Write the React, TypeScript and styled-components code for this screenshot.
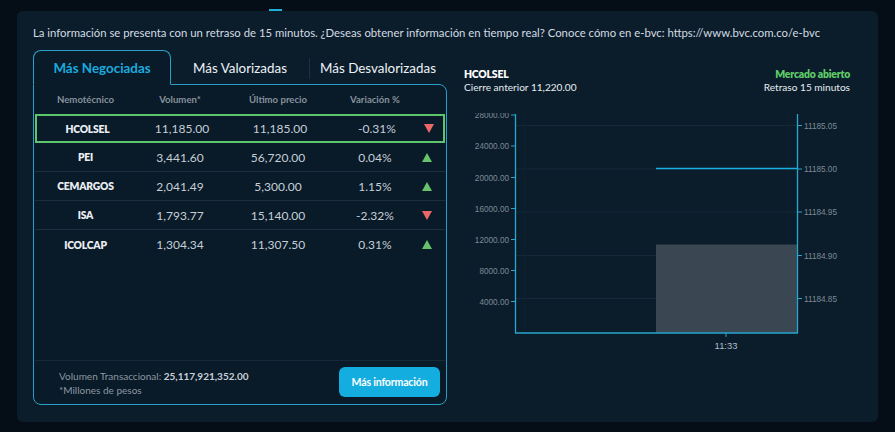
import React from 'react';
import styled, { createGlobalStyle } from 'styled-components';

const GlobalStyle = createGlobalStyle`
  html, body {
    margin: 0;
    padding: 0;
    background: #050e16;
  }
  body {
    font-family: Lato, "Open Sans", Arial, sans-serif;
  }
`;

// data
type Stock = {
  code: string;
  volume: string;
  price: string;
  change: string;
  up: boolean;
};

const STOCKS: Stock[] = [
  { code: 'HCOLSEL', volume: '11,185.00', price: '11,185.00', change: '-0.31%', up: false },
  { code: 'PEI', volume: '3,441.60', price: '56,720.00', change: '0.04%', up: true },
  { code: 'CEMARGOS', volume: '2,041.49', price: '5,300.00', change: '1.15%', up: true },
  { code: 'ISA', volume: '1,793.77', price: '15,140.00', change: '-2.32%', up: false },
  { code: 'ICOLCAP', volume: '1,304.34', price: '11,307.50', change: '0.31%', up: true },
];

const TABS = ['Más Negociadas', 'Más Valorizadas', 'Más Desvalorizadas'];

// layout
const Page = styled.div`
  width: 895px;
  height: 432px;
  padding: 0 17px;
  box-sizing: border-box;
  overflow: hidden;
`;

const TopStrip = styled.div`
  height: 11px;
  padding: 9px 0 0 252px;
  box-sizing: border-box;
`;

const Indicator = styled.div`
  width: 13px;
  height: 3px;
  background: #1fb0da;
`;

const Panel = styled.div`
  height: 411px;
  background: #0b1d2b;
  border-radius: 6px;
  padding: 14px 16px 0 16px;
  box-sizing: border-box;
`;

const Notice = styled.p`
  margin: 0 0 9px;
  font-size: 11.35px;
  line-height: 16px;
  color: #d3dbe2;
  white-space: nowrap;
`;

const Main = styled.div`
  display: flex;
  gap: 17px;
`;

// left card
const Card = styled.div`
  width: 414px;
  display: flex;
  flex-direction: column;
`;

const TabRow = styled.div`
  display: flex;
  height: 34px;
`;

const Tab = styled.div<{ $active?: boolean; $divider?: boolean }>`
  position: relative;
  z-index: ${(p) => (p.$active ? 1 : 0)};
  width: 138px;
  display: flex;
  align-items: center;
  justify-content: center;
  box-sizing: border-box;
  font-size: 13.4px;
  font-weight: ${(p) => (p.$active ? 700 : 400)};
  color: ${(p) => (p.$active ? '#1aaade' : '#eef3f7')};
  background: ${(p) => (p.$active ? '#091a28' : 'transparent')};
  border: ${(p) => (p.$active ? '1px solid #2a9fc8' : 'none')};
  border-bottom: ${(p) => (p.$active ? '1px solid #091a28' : 'none')};
  border-radius: 8px 8px 0 0;
  margin-bottom: ${(p) => (p.$active ? '-1px' : '0')};
  padding-top: 1px;

  &::before {
    content: '';
    display: ${(p) => (p.$divider ? 'block' : 'none')};
    position: absolute;
    left: 0;
    top: 8px;
    bottom: 5px;
    width: 1px;
    background: #1d3142;
  }
`;

const Body = styled.div`
  height: 321px;
  border: 1px solid #2a9fc8;
  border-radius: 0 8px 8px 8px;
  background: #091a28;
  box-sizing: border-box;
  display: flex;
  flex-direction: column;
  padding: 0 1px;
`;

const Grid = styled.div`
  display: grid;
  grid-template-columns: 101px 88px 108px 86px 1fr;
  align-items: center;
`;

const HeadRow = styled(Grid)`
  height: 29px;
  font-size: 9.6px;
  font-weight: 700;
  color: #86929c;
`;

const Row = styled(Grid)<{ $selected?: boolean }>`
  height: 29px;
  box-sizing: border-box;
  border: ${(p) => (p.$selected ? '2px solid #5cc46b' : 'none')};
  border-bottom: ${(p) => (p.$selected ? '2px solid #5cc46b' : '1px solid #1d2f3f')};
  &:last-of-type {
    border-bottom: none;
  }
`;

const Cell = styled.div<{ $code?: boolean }>`
  text-align: center;
  font-size: ${(p) => (p.$code ? '10.3px' : '12px')};
  font-weight: ${(p) => (p.$code ? 800 : 400)};
  color: ${(p) => (p.$code ? '#e9eef3' : '#c6cfd7')};
  letter-spacing: ${(p) => (p.$code ? '-0.2px' : '0')};
`;

const HeadCell = styled.div`
  text-align: center;
`;

const ArrowCell = styled.div`
  display: flex;
  padding-left: 4px;
`;

const Rows = styled.div`
  display: flex;
  flex-direction: column;
`;

const Spacer = styled.div`
  flex: 1;
`;

const Footer = styled.div`
  height: 42px;
  border-top: 1px solid #172a3a;
  display: flex;
  align-items: center;
  justify-content: space-between;
  padding: 0 5px 1px 24px;
`;

const FooterText = styled.div`
  font-size: 10px;
  line-height: 14px;
  color: #8c98a2;
  padding-top: 2px;
`;

const Strong = styled.span`
  font-weight: 700;
  color: #c9d1d8;
`;

const Button = styled.button`
  width: 101px;
  height: 30px;
  border: none;
  border-radius: 6px;
  background: #14ade0;
  color: #ffffff;
  font-family: inherit;
  font-size: 10.6px;
  font-weight: 700;
  letter-spacing: -0.2px;
  cursor: pointer;
`;

// right chart column
const ChartCol = styled.div`
  width: 386px;
  padding-top: 18px;
  box-sizing: border-box;
`;

const ChartHead = styled.div`
  display: flex;
  justify-content: space-between;
  font-size: 10.1px;
  line-height: 13px;
  color: #e7edf2;
  margin-bottom: 19px;
`;

const HeadBlock = styled.div<{ $right?: boolean }>`
  text-align: ${(p) => (p.$right ? 'right' : 'left')};
`;

const Title = styled.div<{ $green?: boolean }>`
  font-size: 10.4px;
  font-weight: 800;
  color: ${(p) => (p.$green ? '#5fcb68' : '#ffffff')};
  letter-spacing: -0.2px;
`;

const Arrow = ({ up }: { up: boolean }) => (
  <svg width="10" height="9" viewBox="0 0 10 9">
    {up ? (
      <polygon points="5,0 10,9 0,9" fill="#67c26d" />
    ) : (
      <polygon points="0,0 10,0 5,9" fill="#ec6768" />
    )}
  </svg>
);

const LEFT_TICKS = [
  { y: 2, label: '28000.00' },
  { y: 33, label: '24000.00' },
  { y: 64.5, label: '20000.00' },
  { y: 95.5, label: '16000.00' },
  { y: 126.5, label: '12000.00' },
  { y: 157.5, label: '8000.00' },
  { y: 188.5, label: '4000.00' },
];

const RIGHT_TICKS = [
  { y: 12.5, label: '11185.05' },
  { y: 56, label: '11185.00' },
  { y: 99, label: '11184.95' },
  { y: 142.5, label: '11184.90' },
  { y: 185.5, label: '11184.85' },
];

const Chart = () => (
  <svg width="386" height="241" viewBox="0 0 386 241" style={{ display: 'block' }}>
    {RIGHT_TICKS.map((t) => (
      <line key={t.label} x1="52" x2="332" y1={t.y} y2={t.y} stroke="#15293a" strokeWidth="1" />
    ))}
    <line x1="61" x2="61" y1="1" y2="220" stroke="#102333" strokeWidth="1" />
    <line x1="324" x2="324" y1="1" y2="220" stroke="#102333" strokeWidth="1" />

    <rect x="192" y="131.5" width="141" height="88.5" fill="#3a4752" />
    <line x1="192" x2="333" y1="55.5" y2="55.5" stroke="#1ab0e2" strokeWidth="1.6" />

    <line x1="51.5" x2="51.5" y1="1" y2="220" stroke="#27a6d0" strokeWidth="1.3" />
    <line x1="333.5" x2="333.5" y1="1" y2="220" stroke="#27a6d0" strokeWidth="1.3" />
    <line x1="51" x2="334" y1="220" y2="220" stroke="#27a6d0" strokeWidth="1.3" />

    {LEFT_TICKS.map((t) => (
      <g key={t.label}>
        <line x1="47" x2="51" y1={t.y} y2={t.y} stroke="#27a6d0" strokeWidth="1" />
        <text
          x="45"
          y={t.y + 3}
          textAnchor="end"
          fontSize="8.2"
          fontFamily="Liberation Sans, Arial, sans-serif"
          fill="#7d8a95"
        >
          {t.label}
        </text>
      </g>
    ))}
    {RIGHT_TICKS.map((t) => (
      <g key={t.label}>
        <line x1="334" x2="338" y1={t.y} y2={t.y} stroke="#27a6d0" strokeWidth="1" />
        <text
          x="340"
          y={t.y + 3}
          fontSize="8.2"
          fontFamily="Liberation Sans, Arial, sans-serif"
          fill="#7d8a95"
        >
          {t.label}
        </text>
      </g>
    ))}
    <line x1="262" x2="262" y1="220" y2="224" stroke="#27a6d0" strokeWidth="1" />
    <text
      x="262"
      y="235.5"
      textAnchor="middle"
      fontSize="9.4"
      fontFamily="Liberation Sans, Arial, sans-serif"
      fill="#b4bec7"
    >
      11:33
    </text>
  </svg>
);

const App: React.FC = () => {
  return (
    <Page>
      <GlobalStyle />
      <TopStrip>
        <Indicator />
      </TopStrip>
      <Panel>
        <Notice>
          La información se presenta con un retraso de 15 minutos. ¿Deseas obtener información en tiempo real? Conoce
          cómo en e-bvc: https://www.bvc.com.co/e-bvc
        </Notice>
        <Main>
          <Card>
            <TabRow>
              {TABS.map((t, i) => (
                <Tab key={t} $active={i === 0} $divider={i === 2}>
                  {t}
                </Tab>
              ))}
            </TabRow>
            <Body>
              <HeadRow>
                <HeadCell>Nemotécnico</HeadCell>
                <HeadCell>Volumen*</HeadCell>
                <HeadCell>Último precio</HeadCell>
                <HeadCell>Variación %</HeadCell>
                <div />
              </HeadRow>
              <Rows>
                {STOCKS.map((s, i) => (
                  <Row key={s.code} $selected={i === 0}>
                    <Cell $code>{s.code}</Cell>
                    <Cell>{s.volume}</Cell>
                    <Cell>{s.price}</Cell>
                    <Cell>{s.change}</Cell>
                    <ArrowCell>
                      <Arrow up={s.up} />
                    </ArrowCell>
                  </Row>
                ))}
              </Rows>
              <Spacer />
              <Footer>
                <FooterText>
                  Volumen Transaccional: <Strong>25,117,921,352.00</Strong>
                  <br />
                  *Millones de pesos
                </FooterText>
                <Button>Más información</Button>
              </Footer>
            </Body>
          </Card>
          <ChartCol>
            <ChartHead>
              <HeadBlock>
                <Title>HCOLSEL</Title>
                Cierre anterior 11,220.00
              </HeadBlock>
              <HeadBlock $right>
                <Title $green>Mercado abierto</Title>
                Retraso 15 minutos
              </HeadBlock>
            </ChartHead>
            <Chart />
          </ChartCol>
        </Main>
      </Panel>
    </Page>
  );
};

export default App;
